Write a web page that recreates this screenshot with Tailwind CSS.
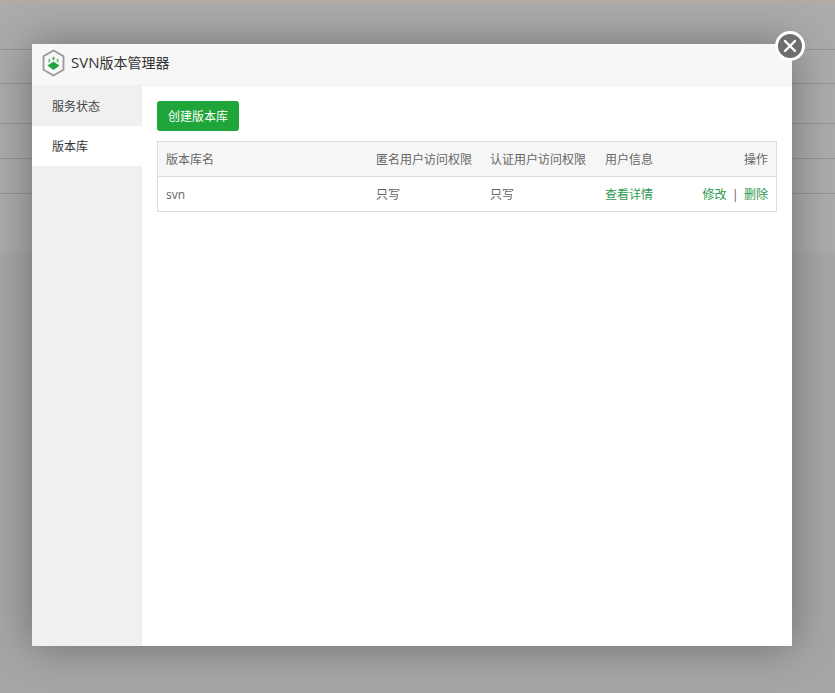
<!DOCTYPE html>
<html lang="zh">
<head>
<meta charset="utf-8">
<script src="https://cdn.jsdelivr.net/npm/@tailwindcss/browser@4"></script>
</head>
<body class="w-[835px] h-[693px] overflow-hidden relative bg-[#a6a6a6] font-['Open_Sans','Noto_Sans_CJK_SC',sans-serif] text-[12px]">
  <!-- page behind the overlay -->
  <div class="flex flex-col">
    <div class="h-[5px] bg-[#b0aca4]"></div>
    <div class="h-[248px] flex flex-col bg-[#ababab]">
      <div class="h-[45px] border-b border-[#949494]"></div>
      <div class="h-[34px] border-b border-[#949494]"></div>
      <div class="h-[40px] border-b border-[#949494]"></div>
      <div class="h-[35px] border-b border-[#949494]"></div>
      <div class="h-[35px] border-b border-[#949494]"></div>
    </div>
  </div>

  <!-- modal -->
  <div class="absolute left-[32px] top-[44px] w-[760px] h-[602px] bg-white flex flex-col shadow-[0_0_40px_rgba(0,0,0,0.35)]">
    <div class="h-[42px] shrink-0 bg-[#f7f7f7] border-b border-[#eeeeee] flex items-center pl-[10px] pb-[4px] gap-[6px]">
      <svg width="23" height="28" viewBox="0 0 23 28" class="shrink-0">
        <path d="M11.5 1.5 L21.5 7.3 V20.7 L11.5 26.5 L1.5 20.7 V7.3 Z" fill="#f7f7f7" stroke="#9a9a9a" stroke-width="1.8"/>
        <path d="M11.5 12.5 C13 14 15.5 15 17.5 16.5 L11.5 21 L5.5 16.5 C7.5 15 10 14 11.5 12.5 Z" fill="#20a53a"/>
        <ellipse cx="11.5" cy="9.5" rx="1.1" ry="1.8" fill="#3fb257"/>
        <ellipse cx="7.4" cy="11.6" rx="1" ry="2" fill="#6cc07c"/>
        <ellipse cx="15.6" cy="11.6" rx="1" ry="2" fill="#6cc07c"/>
      </svg>
      <span class="text-[14px] leading-none text-[#333333]"><span class="text-[15px]">SVN</span>版本管理器</span>
    </div>
    <div class="flex flex-1 min-h-0">
      <div class="w-[110px] shrink-0 bg-[#f0f0f0] flex flex-col">
        <div class="h-[40px] flex items-center pl-[20px] pt-[2px] text-[#444444]">服务状态</div>
        <div class="h-[40px] flex items-center pl-[20px] pt-[2px] bg-white text-[#333333]">版本库</div>
      </div>
      <div class="flex-1 pt-[15px] px-[15px]">
        <button class="block h-[30px] w-[82px] pt-[2px] rounded-[3px] bg-[#20a53a] text-white text-[12px]">创建版本库</button>
        <div class="mt-[10px] border border-[#dddddd] text-[#666666]">
          <div class="flex items-center h-[35px] pt-[2px] bg-[#f6f6f6] border-b border-[#dddddd]">
            <div class="w-[218px] pl-[8px]">版本库名</div>
            <div class="w-[114px]">匿名用户访问权限</div>
            <div class="w-[115px]">认证用户访问权限</div>
            <div class="w-[59px]">用户信息</div>
            <div class="flex-1 text-right pr-[8px]">操作</div>
          </div>
          <div class="flex items-center h-[34px] pt-[2px]">
            <div class="w-[218px] pl-[8px]">svn</div>
            <div class="w-[114px]">只写</div>
            <div class="w-[115px]">只写</div>
            <div class="w-[59px] text-[#2c9a4c]">查看详情</div>
            <div class="flex-1 text-right pr-[8px] text-[#2c9a4c]">修改<span class="text-[#555555] mx-[5.5px]">|</span>删除</div>
          </div>
        </div>
      </div>
    </div>
    <!-- close button -->
    <div class="absolute right-[-13px] top-[-13px] w-[30px] h-[30px] rounded-full bg-[#6e6e6e] border-[3px] border-white flex items-center justify-center">
      <svg width="14" height="14" viewBox="0 0 14 14"><path d="M2 2 L12 12 M12 2 L2 12" stroke="#fff" stroke-width="2.4" stroke-linecap="round"/></svg>
    </div>
  </div>
</body>
</html>
